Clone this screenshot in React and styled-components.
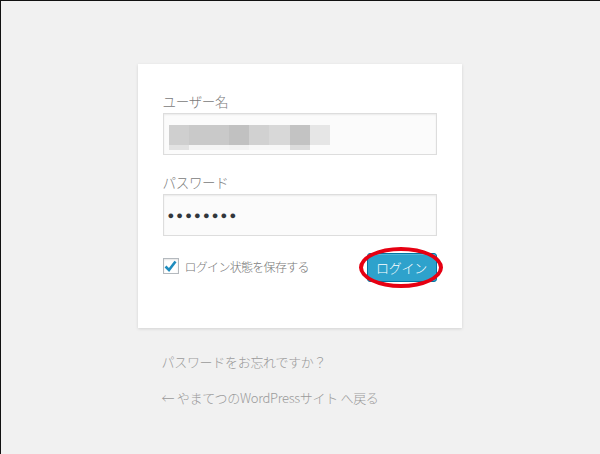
import React from 'react';
import styled, { createGlobalStyle } from 'styled-components';

const Global = createGlobalStyle`
    html, body {
        margin : 0;
        padding : 0;
        background : #f1f1f1;
    }
    * {
        box-sizing : border-box;
    }
`;

const Page = styled.div`
    width : 600px;
    height : 454px;
    background : #f1f1f1;
    border-top : 1px solid #111;
    border-left : 1px solid #111;
    font-family : "Noto Sans CJK JP", "Noto Sans", sans-serif;
    font-weight : 300;
    padding-top : 63px;
    overflow : hidden;
`;

const Column = styled.div`
    width : 324px;
    margin : 0 auto;
    position : relative;
    left : -1px;
`;

const Card = styled.form`
    background : #fff;
    box-shadow : 0 1px 3px rgba(0, 0, 0, 0.13);
    padding : 27px 25px 46px 25px;
    display : flex;
    flex-direction : column;
`;

const Label = styled.label`
    font-size : 13.5px;
    line-height : 20px;
    color : #7a7a7a;
    letter-spacing : -0.3px;
`;

const Field = styled.div`
    height : 42px;
    margin : 2px 0 ${(props)=>props.gap}px 0;
    background : #fbfbfb;
    border : 1px solid #ddd;
    box-shadow : inset 0 1px 2px rgba(0, 0, 0, 0.07);
    display : flex;
    align-items : center;
    padding-left : 3px;
`;

const Dots = styled.span`
    font-family : "DejaVu Sans", sans-serif;
    font-size : 11px;
    letter-spacing : 2.2px;
    color : #32373c;
    padding-left : 1px;
`;

const Bottom = styled.div`
    display : flex;
    justify-content : space-between;
    align-items : center;
    margin-top : 17px;
`;

const Remember = styled.label`
    display : flex;
    align-items : center;
    gap : 6px;
    font-size : 12px;
    color : #777;
    letter-spacing : -0.7px;
    margin-top : -3px;
`;

const Box = styled.span`
    width : 16px;
    height : 16px;
    border : 1px solid #b4b9be;
    background : #fff;
    box-shadow : inset 0 1px 2px rgba(0, 0, 0, 0.1);
    display : flex;
    align-items : center;
    justify-content : center;
`;

const ButtonWrap = styled.div`
    position : relative;
    width : 70px;
    height : 29px;
`;

const Button = styled.button`
    width : 70px;
    height : 29px;
    background : #2ea2cc;
    border : 1px solid #0074a2;
    border-radius : 3px;
    color : #fff;
    font-family : inherit;
    font-weight : 300;
    font-size : 13px;
    letter-spacing : -0.3px;
    padding : 0;
    box-shadow : inset 0 1px 0 rgba(120, 200, 230, 0.5);
`;

const Ring = styled.span`
    position : absolute;
    left : -8px;
    top : -6px;
    width : 84px;
    height : 41px;
    border : 4.5px solid #e60012;
    border-radius : 50%;
    pointer-events : none;
`;

const Links = styled.div`
    padding : 24px 0 0 24px;
    display : flex;
    flex-direction : column;
    gap : 16px;
`;

const Link = styled.a`
    font-size : 13px;
    line-height : 20px;
    color : #9a9a9a;
    text-decoration : none;
    letter-spacing : -0.3px;
`;

const blocks = [
    { x : 2, w : 20, c : '#cfcfcf', b : '#e2e2e2' },
    { x : 22, w : 40, c : '#c9c9c9', b : '#f4f4f4' },
    { x : 62, w : 20, c : '#c1c1c1', b : '#f2f2f2' },
    { x : 82, w : 20, c : '#d1d1d1', b : '#f7f7f7' },
    { x : 102, w : 21, c : '#d8d8d8', b : '#f7f7f7' },
    { x : 123, w : 20, c : '#c3c3c3', b : '#dcdcdc' },
    { x : 143, w : 20, c : '#e6e6e6', b : '#fbfbfb' },
];

const Mosaic = () => (
    <svg width="170" height="40" viewBox="0 0 170 40">
        {blocks.map((k)=>(
            <g key={k.x}>
                <rect x={k.x} y="11" width={k.w} height="20" fill={k.c} />
                <rect x={k.x} y="31" width={k.w} height="5" fill={k.b} />
            </g>
        ))}
    </svg>
);

const App = () => {
  return (
    <Page>
        <Global />
        <Column>
            <Card>
                <Label>ユーザー名</Label>
                <Field gap={17}>
                    <Mosaic />
                </Field>
                <Label>パスワード</Label>
                <Field gap={0}>
                    <Dots>●●●●●●●●</Dots>
                </Field>
                <Bottom>
                    <Remember>
                        <Box>
                            <svg width="13" height="12" viewBox="0 0 13 12">
                                <path d="M1.5 6.5 L5 10 L11.5 1.5" fill="none" stroke="#1e8cbe" strokeWidth="2.6" />
                            </svg>
                        </Box>
                        ログイン状態を保存する
                    </Remember>
                    <ButtonWrap>
                        <Button type="button">ログイン</Button>
                        <Ring />
                    </ButtonWrap>
                </Bottom>
            </Card>
            <Links>
                <Link>パスワードをお忘れですか？</Link>
                <Link>← やまてつのWordPressサイト へ戻る</Link>
            </Links>
        </Column>
    </Page>
  )
}

export default App
